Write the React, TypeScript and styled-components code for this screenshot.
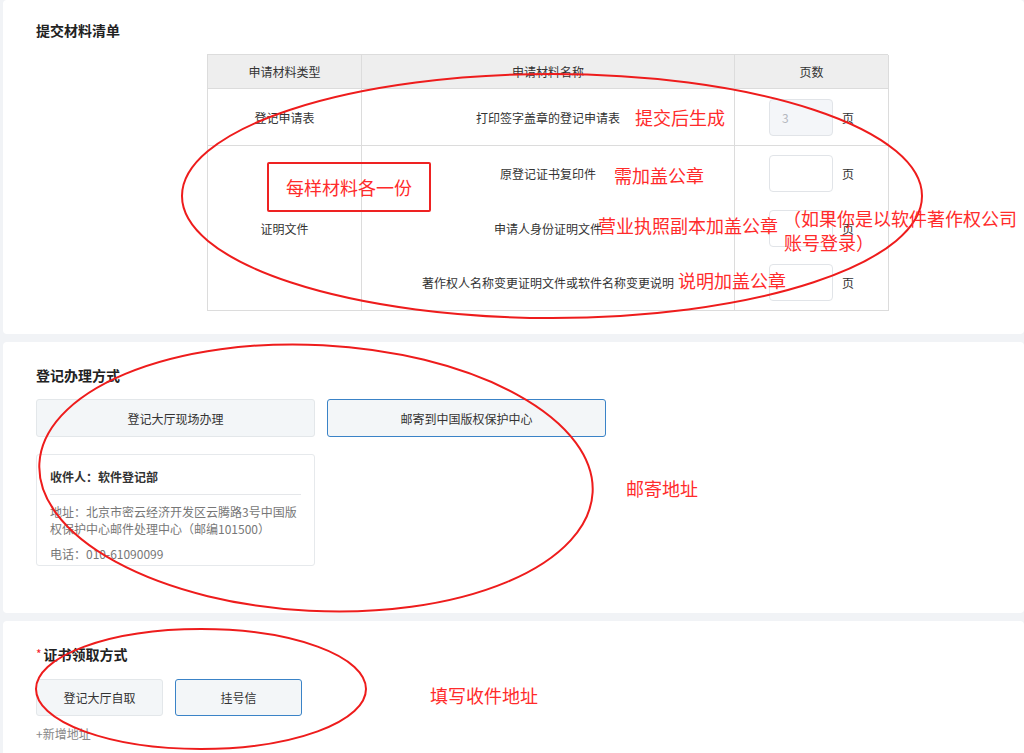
import styled, { createGlobalStyle } from "styled-components";

const GlobalStyle = createGlobalStyle`
  html, body {
    margin: 0;
    padding: 0;
    background: #f1f3f6;
  }
  body {
    font-family: "Noto Sans CJK SC", "Noto Sans", sans-serif;
    color: #333;
  }
`;

const Page = styled.div`
  position: relative;
  width: 1024px;
  height: 753px;
  overflow: hidden;
  padding-left: 3px;
  box-sizing: border-box;
  display: flex;
  flex-direction: column;
  gap: 8px;
`;

const Card = styled.section<{ $top: number; $bottom: number }>`
  background: #fff;
  border-radius: 4px;
  padding: ${(p) => p.$top}px 0 ${(p) => p.$bottom}px 33px;
  flex-shrink: 0;
`;

const Title = styled.h3`
  margin: 0;
  font-size: 14px;
  line-height: 20px;
  font-weight: 700;
  color: #222;
  display: flex;
  align-items: center;
`;

const Star = styled.span`
  color: #f5222d;
  font-size: 12px;
  margin-right: 2px;
  font-weight: 400;
`;

const Table = styled.div`
  margin: 14px 0 0 171px;
  width: 681px;
  display: grid;
  grid-template-columns: 154px 373px 154px;
  border-top: 1px solid #dcdcdc;
  border-left: 1px solid #dcdcdc;
  box-sizing: border-box;
  font-size: 12px;
  color: #333;
`;

const Cell = styled.div<{ $head?: boolean; $h?: number }>`
  border-right: 1px solid #dcdcdc;
  border-bottom: 1px solid #dcdcdc;
  background: ${(p) => (p.$head ? "#eeeeee" : "#fff")};
  height: ${(p) => (p.$h ? `${p.$h}px` : "auto")};
  display: flex;
  flex-direction: column;
  align-items: center;
  justify-content: center;
  box-sizing: border-box;
`;

const SubRow = styled.div`
  height: 55px;
  width: 100%;
  display: flex;
  align-items: center;
  justify-content: center;
  gap: 9px;
`;

const PageInput = styled.div<{ $disabled?: boolean }>`
  width: 64px;
  height: 37px;
  box-sizing: border-box;
  border: 1px solid #e1e4e8;
  border-radius: 4px;
  background: ${(p) => (p.$disabled ? "#f4f6f9" : "#fff")};
  color: #b4b8bf;
  font-size: 12px;
  display: flex;
  align-items: center;
  padding-left: 12px;
`;

const Unit = styled.span`
  font-size: 12px;
  color: #333;
`;

const OptionRow = styled.div<{ $mt: number }>`
  display: flex;
  gap: 12px;
  margin-top: ${(p) => p.$mt}px;
`;

const Option = styled.div<{ $active?: boolean; $w: number; $h: number }>`
  width: ${(p) => p.$w}px;
  height: ${(p) => p.$h}px;
  box-sizing: border-box;
  border: 1px solid ${(p) => (p.$active ? "#3a83c7" : "#e3e7ea")};
  border-radius: 3px;
  background: #f3f6f8;
  display: flex;
  align-items: center;
  justify-content: center;
  font-size: 12px;
  color: #333;
`;

const AddressBox = styled.div`
  margin-top: 17px;
  width: 279px;
  height: 112px;
  box-sizing: border-box;
  border: 1px solid #e6e9ec;
  border-radius: 3px;
  padding: 0 13px;
  font-size: 12px;
  overflow: hidden;
`;

const Receiver = styled.div`
  font-weight: 700;
  color: #333;
  line-height: 17px;
  padding: 13px 0 9px;
  border-bottom: 1px solid #e5e7ea;
`;

const AddrLine = styled.div<{ $mt: number }>`
  color: #777;
  line-height: 17px;
  margin-top: ${(p) => p.$mt}px;
`;

const AddLink = styled.div`
  margin-top: 9px;
  font-size: 12px;
  color: #888;
  line-height: 17px;
`;

const Marks = styled.svg`
  position: absolute;
  left: 0;
  top: 0;
  pointer-events: none;
`;

const Note = styled.div<{ $x: number; $y: number }>`
  position: absolute;
  left: ${(p) => p.$x}px;
  top: ${(p) => p.$y}px;
  color: #ff2b2b;
  font-size: 18px;
  line-height: 22px;
  white-space: nowrap;
`;

const NoteBox = styled.div`
  position: absolute;
  left: 267px;
  top: 162px;
  width: 164px;
  height: 50px;
  box-sizing: border-box;
  border: 2px solid #ee2222;
  border-radius: 2px;
  color: #ff2b2b;
  font-size: 18px;
  display: flex;
  align-items: center;
  justify-content: center;
`;

const proofs = [
  "原登记证书复印件",
  "申请人身份证明文件",
  "著作权人名称变更证明文件或软件名称变更说明",
];

export default function App() {
  return (
    <Page>
      <GlobalStyle />
      <Card $top={20} $bottom={23}>
        <Title>提交材料清单</Title>
        <Table>
          <Cell $head $h={34}>申请材料类型</Cell>
          <Cell $head $h={34}>申请材料名称</Cell>
          <Cell $head $h={34}>页数</Cell>

          <Cell $h={57}>登记申请表</Cell>
          <Cell $h={57}>打印签字盖章的登记申请表</Cell>
          <Cell $h={57}>
            <SubRow>
              <PageInput $disabled>3</PageInput>
              <Unit>页</Unit>
            </SubRow>
          </Cell>

          <Cell $h={165}>证明文件</Cell>
          <Cell $h={165}>
            {proofs.map((p) => (
              <SubRow key={p}>{p}</SubRow>
            ))}
          </Cell>
          <Cell $h={165}>
            {proofs.map((p) => (
              <SubRow key={p}>
                <PageInput />
                <Unit>页</Unit>
              </SubRow>
            ))}
          </Cell>
        </Table>
      </Card>

      <Card $top={23} $bottom={47}>
        <Title>登记办理方式</Title>
        <OptionRow $mt={14}>
          <Option $w={279} $h={38}>登记大厅现场办理</Option>
          <Option $w={279} $h={38} $active>
            邮寄到中国版权保护中心
          </Option>
        </OptionRow>
        <AddressBox>
          <Receiver>收件人：软件登记部</Receiver>
          <AddrLine $mt={8}>
            地址：北京市密云经济开发区云腾路3号中国版权保护中心邮件处理中心（邮编101500）
          </AddrLine>
          <AddrLine $mt={8}>电话：010-61090099</AddrLine>
        </AddressBox>
      </Card>

      <Card $top={23} $bottom={40}>
        <Title>
          <Star>*</Star>证书领取方式
        </Title>
        <OptionRow $mt={15}>
          <Option $w={127} $h={37}>登记大厅自取</Option>
          <Option $w={127} $h={37} $active>
            挂号信
          </Option>
        </OptionRow>
        <AddLink>+新增地址</AddLink>
      </Card>

      <Marks width="1024" height="753" viewBox="0 0 1024 753">
        <g fill="none" stroke="#ee1c1c" strokeWidth="2">
          <ellipse cx="552" cy="196" rx="370" ry="122" />
          <ellipse cx="316" cy="478" rx="277" ry="133" transform="rotate(3 316 478)" />
          <ellipse cx="201" cy="689" rx="165" ry="60" />
        </g>
      </Marks>

      <NoteBox>每样材料各一份</NoteBox>
      <Note $x={635} $y={106}>提交后生成</Note>
      <Note $x={614} $y={164}>需加盖公章</Note>
      <Note $x={598} $y={214}>营业执照副本加盖公章</Note>
      <Note $x={783} $y={207}>（如果你是以软件著作权公司</Note>
      <Note $x={784} $y={231}>账号登录）</Note>
      <Note $x={678} $y={269}>说明加盖公章</Note>
      <Note $x={626} $y={477}>邮寄地址</Note>
      <Note $x={430} $y={684}>填写收件地址</Note>
    </Page>
  );
}
